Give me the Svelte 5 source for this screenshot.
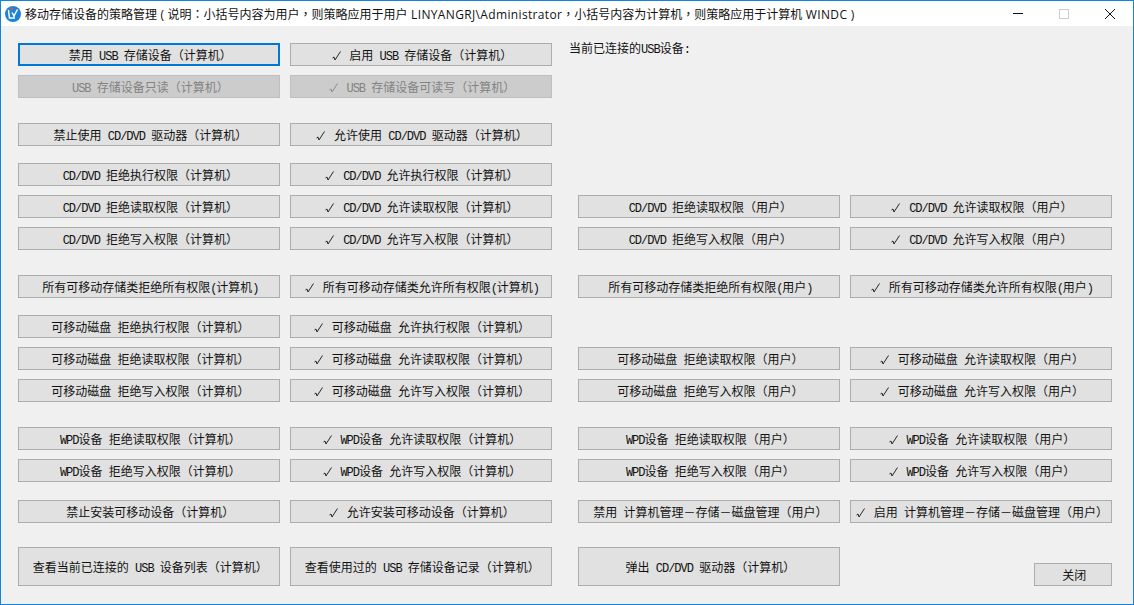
<script>
  // Left pair of columns is "computer" policy, right pair is "user" policy
  const C = '（计算机）'
  const U = '（用户）'

  // gap = space above the row, tall = double height row
  const rows = [
    { gap: 0, cells: [
      { text: '禁用 USB 存储设备' + C, focus: true },
      { text: '启用 USB 存储设备' + C, tick: true },
      { label: '当前已连接的USB设备:' },
    ] },
    { gap: 9, cells: [
      { text: 'USB 存储设备只读' + C, off: true },
      { text: 'USB 存储设备可读写' + C, off: true, tick: true },
    ] },
    { gap: 25, cells: [
      { text: '禁止使用 CD/DVD 驱动器' + C },
      { text: '允许使用 CD/DVD 驱动器' + C, tick: true },
    ] },
    { gap: 17, cells: [
      { text: 'CD/DVD 拒绝执行权限' + C },
      { text: 'CD/DVD 允许执行权限' + C, tick: true },
    ] },
    { gap: 9, cells: [
      { text: 'CD/DVD 拒绝读取权限' + C },
      { text: 'CD/DVD 允许读取权限' + C, tick: true },
      { text: 'CD/DVD 拒绝读取权限' + U },
      { text: 'CD/DVD 允许读取权限' + U, tick: true },
    ] },
    { gap: 9, cells: [
      { text: 'CD/DVD 拒绝写入权限' + C },
      { text: 'CD/DVD 允许写入权限' + C, tick: true },
      { text: 'CD/DVD 拒绝写入权限' + U },
      { text: 'CD/DVD 允许写入权限' + U, tick: true },
    ] },
    { gap: 25, cells: [
      { text: '所有可移动存储类拒绝所有权限(计算机)' },
      { text: '所有可移动存储类允许所有权限(计算机)', tick: true },
      { text: '所有可移动存储类拒绝所有权限(用户)' },
      { text: '所有可移动存储类允许所有权限(用户)', tick: true },
    ] },
    { gap: 17, cells: [
      { text: '可移动磁盘 拒绝执行权限' + C },
      { text: '可移动磁盘 允许执行权限' + C, tick: true },
    ] },
    { gap: 9, cells: [
      { text: '可移动磁盘 拒绝读取权限' + C },
      { text: '可移动磁盘 允许读取权限' + C, tick: true },
      { text: '可移动磁盘 拒绝读取权限' + U },
      { text: '可移动磁盘 允许读取权限' + U, tick: true },
    ] },
    { gap: 9, cells: [
      { text: '可移动磁盘 拒绝写入权限' + C },
      { text: '可移动磁盘 允许写入权限' + C, tick: true },
      { text: '可移动磁盘 拒绝写入权限' + U },
      { text: '可移动磁盘 允许写入权限' + U, tick: true },
    ] },
    { gap: 25, cells: [
      { text: 'WPD设备 拒绝读取权限' + C },
      { text: 'WPD设备 允许读取权限' + C, tick: true },
      { text: 'WPD设备 拒绝读取权限' + U },
      { text: 'WPD设备 允许读取权限' + U, tick: true },
    ] },
    { gap: 9, cells: [
      { text: 'WPD设备 拒绝写入权限' + C },
      { text: 'WPD设备 允许写入权限' + C, tick: true },
      { text: 'WPD设备 拒绝写入权限' + U },
      { text: 'WPD设备 允许写入权限' + U, tick: true },
    ] },
    { gap: 18, cells: [
      { text: '禁止安装可移动设备' + C },
      { text: '允许安装可移动设备' + C, tick: true },
      { text: '禁用 计算机管理－存储－磁盘管理' + U },
      { text: '启用 计算机管理－存储－磁盘管理' + U, tick: true },
    ] },
    { gap: 24, tall: true, cells: [
      { text: '查看当前已连接的 USB 设备列表' + C },
      { text: '查看使用过的 USB 存储设备记录' + C },
      { text: '弹出 CD/DVD 驱动器' + C },
      { text: '关闭', close: true },
    ] },
  ]

  function segments(text) {
    return text.split(/([\x20-\x7e]+)/).filter(Boolean).map(s => ({
      s,
      latin: /^[\x20-\x7e]/.test(s),
    }))
  }
</script>

{#snippet mixed(text)}
  {#each segments(text) as seg}
    <span class:latin={seg.latin}>{seg.s}</span>
  {/each}
{/snippet}

<div class="window" lang="zh-CN">
  <header class="titlebar">
    <svg class="logo" width="16" height="16" viewBox="0 0 16 16">
      <circle cx="8" cy="8" r="8" fill="#1c84d8" />
      <path d="M3.5 4 L4.5 12 H8 M7 6.5 L9 10 L12.5 3.5 M9 10 V13" fill="none" stroke="#fff" stroke-width="1.5" />
      <circle cx="6.6" cy="2.8" r="1.4" fill="#e8503a" />
    </svg>
    <span class="title" lang="zh-TW">移动存储设备的策略管理 ( 说明：小括号内容为用户，则策略应用于用户 <span class="wide">LINYANGRJ\Administrator</span>，小括号内容为计算机，则策略应用于计算机 <span class="wide">WINDC</span> )</span>
    <div class="controls">
      <svg class="ctl" width="46" height="25" viewBox="0 0 46 25"><path d="M18 12.5 H28" stroke="#111" /></svg>
      <svg class="ctl" width="46" height="25" viewBox="0 0 46 25"><rect x="18.5" y="8.5" width="9" height="9" fill="none" stroke="#ccc" /></svg>
      <svg class="ctl" width="46" height="25" viewBox="0 0 46 25"><path d="M18 8 L28 18 M28 8 L18 18" stroke="#111" /></svg>
    </div>
  </header>

  <main class="content">
    {#each rows as row}
      <div class="row" class:tall={row.tall} style="margin-top: {row.gap}px">
        {#each row.cells as cell}
          {#if cell.label}
            <div class="label">{@render mixed(cell.label)}</div>
          {:else}
            <button class:focus={cell.focus} class:close={cell.close} disabled={cell.off}>
              {#if cell.tick}
                <svg class="tick" width="12" height="12" viewBox="0 0 12 12">
                  <path d="M2.5 8 L4 7 L5 10 L10.5 1.5" fill="none" stroke="currentColor" stroke-width="0.9" />
                </svg>
              {/if}
              {@render mixed(cell.text)}
            </button>
          {/if}
        {/each}
      </div>
    {/each}
  </main>
</div>

<style>
  :global(*, *::before, *::after) { box-sizing: border-box; }
  :global(body) {
    margin: 0;
    overflow: hidden;
    font-family: "Noto Sans CJK SC", sans-serif;
    font-size: 12px;
    color: #111;
  }

  .window {
    width: 1134px;
    height: 605px;
    border: 1px solid #0f86dc;
    background: #f0f0f0;
    display: flex;
    flex-direction: column;
  }

  .titlebar {
    height: 25px;
    background: #fff;
    display: flex;
    align-items: center;
    padding-left: 4px;
  }

  .logo { flex-shrink: 0; }

  .title {
    margin-left: 4px;
    white-space: nowrap;
    font-family: "Open Sans", "Noto Sans CJK TC", sans-serif;
    font-size: 12px;
    word-spacing: 0.4px;
  }

  .wide { letter-spacing: 0.35px; }

  .controls {
    margin-left: auto;
    display: flex;
  }

  .ctl { display: block; }

  .content {
    padding: 17px 0 0 17px;
  }

  .row {
    display: flex;
    gap: 10px;
    height: 23px;
  }

  .row.tall { height: 39px; }

  .row > :nth-child(3) { margin-left: 16px; }

  button {
    width: 262px;
    height: 100%;
    padding: 0;
    border: 1px solid #adadad;
    border-radius: 0;
    background: #e1e1e1;
    color: #111;
    font: inherit;
    white-space: pre;
  }

  button.focus {
    border: 2px solid #0078d7;
  }

  button:disabled {
    background: #cccccc;
    border-color: #bfbfbf;
    color: #838383;
  }

  button.close {
    width: 78px;
    height: 23px;
    margin-left: auto;
    align-self: flex-end;
    margin-right: 21px;
  }

  .row > .label {
    margin-left: 7px;
    margin-top: -1px;
    line-height: 12px;
    white-space: pre;
  }

  .tick {
    vertical-align: -2px;
    margin-right: 5px;
  }

  .latin {
    font-family: "Liberation Mono", monospace;
    font-size: 12px;
    letter-spacing: -1px;
  }
</style>
